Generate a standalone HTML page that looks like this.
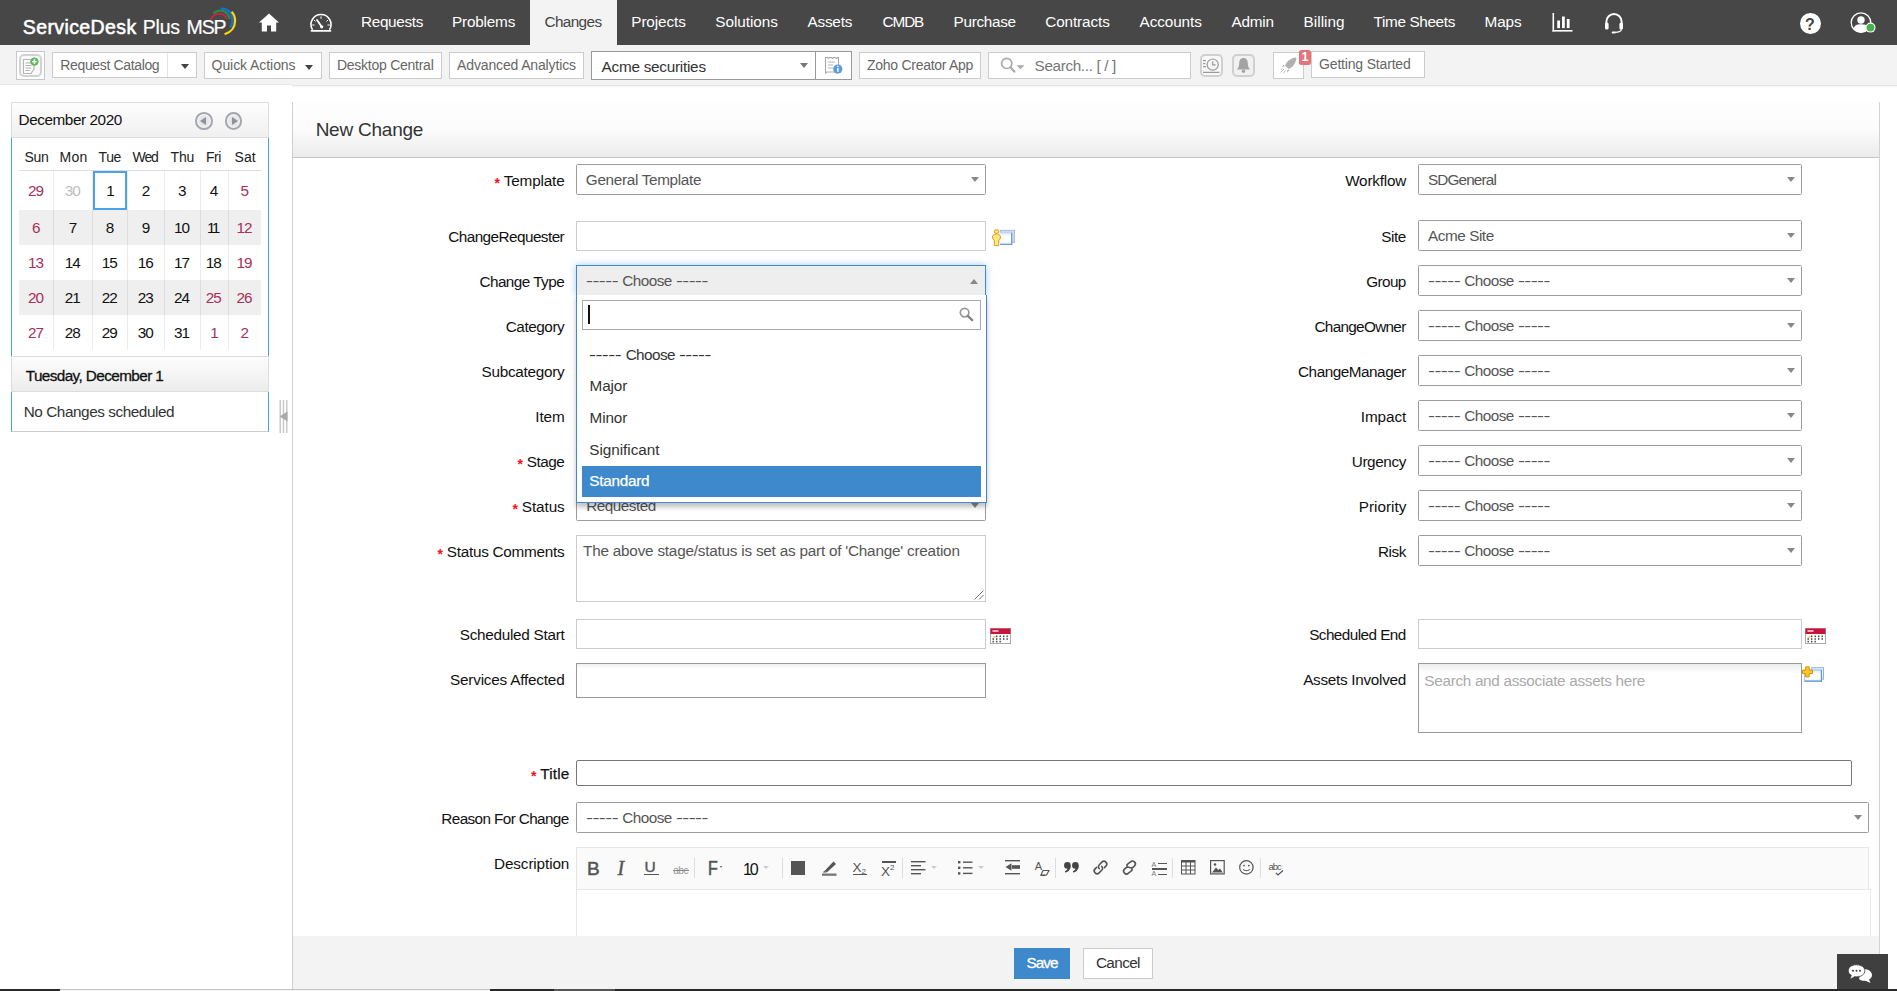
<!DOCTYPE html>
<html lang="en"><head><meta charset="utf-8"><title>ServiceDesk Plus MSP - New Change</title>
<style>
*{box-sizing:border-box;margin:0;padding:0}
html,body{width:1897px;height:991px;overflow:hidden;background:#fff}
body{position:relative;font-family:"Liberation Sans",sans-serif;font-size:15px;color:#111}
.t{position:absolute;white-space:nowrap;line-height:1;display:block}
.b{position:absolute}
svg{position:absolute;overflow:visible}
#hdr{left:0;top:0;width:1897px;height:45px;background:#474747}
#tab{left:530px;top:0;width:87px;height:45px;background:#f3f3f3}
#tb{left:0;top:45px;width:1897px;height:40px;background:#f3f3f3}
.btn{position:absolute;background:#fff;border:1px solid #ccc}
.sel{position:absolute;height:31px;background:#fff;border:1px solid #9c9c9c;border-radius:1.5px}
.sel i{position:absolute;right:6.2px;top:12px;width:0;height:0;border-left:4.5px solid transparent;border-right:4.5px solid transparent;border-top:5px solid #888}
.inp{position:absolute;height:30px;background:#fff;border:1px solid #ccc}
.sep{position:absolute;width:1px;top:858px;height:20px;background:#ddd}
</style></head>
<body>
<div class="b" id="hdr"></div><div class="b" id="tab"></div>
<span class="t" style="left:22.81px;top:18.00px;font-size:19.5px;color:#fff;letter-spacing:0.392px;-webkit-text-stroke:0.55px #fff;transform:translateY(0.3px);">ServiceDesk</span>
<span class="t" style="left:142.81px;top:18.00px;font-size:19.5px;color:#fff;letter-spacing:-0.221px;-webkit-text-stroke:0.2px #fff;transform:translateY(0.3px);">Plus</span>
<span class="t" style="left:186.61px;top:18.00px;font-size:19.5px;color:#fff;letter-spacing:-1.145px;-webkit-text-stroke:0.2px #fff;transform:translateY(0.3px);">MSP</span>
<svg style="left:208px;top:6px" width="32" height="32" viewBox="0 0 32 32" fill="none" stroke-linecap="butt">
<path d="M2.900 14 C4.500 9.500 8 7.900 11 7.900 C14.500 7.900 17.500 10 19 12.800" stroke="#d0243c" stroke-width="1.700"/>
<path d="M5.300 7.500 C7.500 5.500 10 4.700 12.200 4.700 C17 4.700 20.500 8.500 21.900 13.200" stroke="#2a8a47" stroke-width="2.300"/>
<path d="M13 2.900 C19 2.500 23.500 6.500 24.300 11 C24.900 15 24 19 21.900 21.600" stroke="#1a6fc9" stroke-width="2.500"/>
<path d="M23.600 5.700 C26 8 27.100 11.500 27.100 14.800 C27.100 21 23.300 26.300 16.600 28.300" stroke="#ffd60a" stroke-width="2.200"/>
</svg>
<svg style="left:259px;top:13px" width="20" height="19" viewBox="0 0 20 19"><path d="M10 0.5 L0 9.6 H2.8 V18.5 H8 V12.5 H12 V18.5 H17.2 V9.6 H20 Z" fill="#fff"/></svg>
<svg style="left:310px;top:14px" width="22" height="18" viewBox="0 0 22 18" fill="none" stroke="#fff" stroke-width="1.6" stroke-linecap="round"><path d="M2.2 15.2 A10 10 0 1 1 19.8 15.2"/><path d="M1.5 16.8 H20.5" stroke-width="1.8"/><path d="M7 6 L11.5 12.5" stroke-width="1.8"/><circle cx="11.7" cy="12.8" r="1.6" fill="#fff" stroke="none"/><path d="M11 2.8v1.6M4.2 6.2l1 1M17.8 6.2l-1 1M2.6 11h1.5M19.4 11h-1.5" stroke-width="1"/></svg>
<span class="t" style="left:361.04px;top:14.00px;font-size:15.3px;color:#fff;letter-spacing:-0.337px;">Requests</span>
<span class="t" style="left:452.04px;top:14.00px;font-size:15.3px;color:#fff;letter-spacing:-0.192px;">Problems</span>
<span class="t" style="left:544.54px;top:14.00px;font-size:15.3px;color:#444;letter-spacing:-0.620px;">Changes</span>
<span class="t" style="left:631.29px;top:14.00px;font-size:15.3px;color:#fff;letter-spacing:-0.107px;">Projects</span>
<span class="t" style="left:715.29px;top:14.00px;font-size:15.3px;color:#fff;letter-spacing:-0.053px;">Solutions</span>
<span class="t" style="left:807.54px;top:14.00px;font-size:15.3px;color:#fff;letter-spacing:-0.228px;">Assets</span>
<span class="t" style="left:882.54px;top:14.00px;font-size:15.3px;color:#fff;letter-spacing:-1.094px;">CMDB</span>
<span class="t" style="left:953.54px;top:14.00px;font-size:15.3px;color:#fff;letter-spacing:-0.301px;">Purchase</span>
<span class="t" style="left:1045.29px;top:14.00px;font-size:15.3px;color:#fff;letter-spacing:-0.119px;">Contracts</span>
<span class="t" style="left:1139.54px;top:14.00px;font-size:15.3px;color:#fff;letter-spacing:-0.094px;">Accounts</span>
<span class="t" style="left:1231.54px;top:14.00px;font-size:15.3px;color:#fff;letter-spacing:-0.211px;">Admin</span>
<span class="t" style="left:1303.54px;top:14.00px;font-size:15.3px;color:#fff;letter-spacing:0.034px;">Billing</span>
<span class="t" style="left:1373.54px;top:14.00px;font-size:15.3px;color:#fff;letter-spacing:-0.355px;">Time Sheets</span>
<span class="t" style="left:1484.54px;top:14.00px;font-size:15.3px;color:#fff;letter-spacing:-0.114px;">Maps</span>
<svg style="left:1552px;top:13px" width="21" height="19" viewBox="0 0 21 19" fill="#fff"><rect x="0.5" y="0" width="1.6" height="18.6"/><rect x="0.5" y="17" width="20" height="1.6"/><rect x="5.2" y="7.5" width="2.8" height="7.6"/><rect x="10" y="3.5" width="2.8" height="11.6"/><rect x="14.8" y="6" width="2.8" height="9.1"/></svg>
<svg style="left:1604px;top:13px" width="20" height="21" viewBox="0 0 20 21" fill="none" stroke="#fff"><path d="M2.4 11 V8.6 A7.6 7.6 0 0 1 17.6 8.6 V11" stroke-width="1.9"/><rect x="1" y="9.5" width="3.6" height="7" rx="1.6" fill="#fff" stroke="none"/><rect x="15.4" y="9.5" width="3.6" height="7" rx="1.6" fill="#fff" stroke="none"/><path d="M17.4 16 C17.4 18.6 14 19.4 10.6 19.4" stroke-width="1.2"/><rect x="7.6" y="18.4" width="4" height="2" rx="1" fill="#fff" stroke="none"/></svg>
<div class="b" style="left:1799.5px;top:12.5px;width:21px;height:21px;border-radius:50%;background:#fff"></div>
<span class="t" style="left:1805.12px;top:17.00px;font-size:16px;color:#474747;font-weight:bold;">?</span>
<svg style="left:1850px;top:12px" width="26" height="22" viewBox="0 0 26 22"><circle cx="11" cy="10.6" r="9.8" fill="#474747" stroke="#fff" stroke-width="1.3"/><circle cx="11" cy="8" r="3.7" fill="#fff"/><path d="M3.6 17 C4.2 12.6 8 12.2 11 12.2 C14 12.2 17.8 12.6 18.4 17 A9.8 9.8 0 0 1 3.6 17Z" fill="#fff"/><circle cx="20.5" cy="15.6" r="5" fill="#fff"/><circle cx="20.5" cy="15.6" r="3.9" fill="#47b04b"/></svg>
<div class="b" id="tb"></div>
<div class="b" style="left:0px;top:84px;width:292px;height:1px;background:#e8e8e8"></div>
<div class="b" style="left:292px;top:85px;width:1605px;height:1px;background:#e5e5e5"></div>
<div class="b" style="left:292px;top:86px;width:1605px;height:1px;background:#f6f6f6"></div>
<div class="b" style="left:292px;top:87px;width:1605px;height:1px;background:#fcfcfc"></div>
<div class="b" style="left:16px;top:51px;width:29px;height:29px;background:#fdfdfd;border:1px solid #c8c8c8"></div>
<div class="b" style="left:19px;top:54px;width:23px;height:23px;background:#fbfbfb;border:2px solid #d2d2d2;border-radius:5px"></div>
<svg style="left:22px;top:56px" width="18" height="19" viewBox="0 0 18 19"><path d="M1.5 3.5 H12 V13 L9 17.5 H1.5Z" fill="#fff" stroke="#b5b5b5" stroke-width="1.200"/><path d="M3.500 7h6M3.500 9.500h6M3.500 12h6M3.500 14.500h4" stroke="#b0b0b0" stroke-width="1.100"/><circle cx="12.4" cy="5.6" r="4.2" fill="#5cb85c"/><path d="M12.4 3.2v4.800M10 5.600h4.800" stroke="#fff" stroke-width="1.400"/></svg>
<div class="btn" style="left:52px;top:52px;width:145px;height:26px;"></div>
<div class="b" style="left:167px;top:53px;width:1px;height:24px;background:#e4e4e4"></div>
<span class="t" style="left:60.28px;top:58.00px;font-size:14px;color:#666;letter-spacing:-0.350px;">Request Catalog</span>
<div class="b" style="left:180.5px;top:64px;border-left:4.5px solid transparent;border-right:4.5px solid transparent;border-top:5px solid #444"></div>
<div class="btn" style="left:204px;top:52px;width:118px;height:27px;"></div>
<span class="t" style="left:211.58px;top:58.00px;font-size:14px;color:#666;letter-spacing:-0.069px;">Quick Actions</span>
<div class="b" style="left:305px;top:64.5px;border-left:4.5px solid transparent;border-right:4.5px solid transparent;border-top:5px solid #444"></div>
<div class="btn" style="left:329px;top:52px;width:113px;height:27px;"></div>
<span class="t" style="left:336.88px;top:58.00px;font-size:14px;color:#666;letter-spacing:-0.249px;">Desktop Central</span>
<div class="btn" style="left:449px;top:52px;width:135px;height:27px;"></div>
<span class="t" style="left:457.08px;top:58.00px;font-size:14px;color:#666;letter-spacing:-0.147px;">Advanced Analytics</span>
<div class="b" style="left:591px;top:51px;width:225px;height:29px;background:#fff;border:1px solid #999"></div>
<span class="t" style="left:601.54px;top:59.00px;font-size:15.3px;color:#333;letter-spacing:-0.247px;">Acme securities</span>
<div class="b" style="left:800px;top:63px;border-left:4.5px solid transparent;border-right:4.5px solid transparent;border-top:5px solid #777"></div>
<div class="b" style="left:815px;top:51px;width:37px;height:29px;background:#fff;border:1px solid #999"></div>
<svg style="left:824px;top:56px" width="20" height="19" viewBox="0 0 20 19"><path d="M1.5 1.5 h2 l1 1 1-1 h2 l1 1 1-1 h2 l1 1 1-1 h1 V16 l-1.5 1 -1.5-1 H3 l-1.500 1Z" fill="#fff" stroke="#a9a9a9" stroke-width="1.1"/><path d="M4 6h7M4 9h5M4 12h5" stroke="#b5b5b5" stroke-width="1.2"/><circle cx="13.8" cy="13" r="4.6" fill="#5b9bd8"/><rect x="13.1" y="12" width="1.5" height="3.8" fill="#fff"/><rect x="13.1" y="9.8" width="1.5" height="1.4" fill="#fff"/></svg>
<div class="btn" style="left:859px;top:52px;width:122px;height:27px;"></div>
<span class="t" style="left:867.08px;top:58.00px;font-size:14px;color:#666;letter-spacing:-0.288px;">Zoho Creator App</span>
<div class="btn" style="left:988px;top:52px;width:203px;height:27px;"></div>
<svg style="left:1000px;top:57px" width="26" height="16" viewBox="0 0 26 16" fill="none"><circle cx="6.7" cy="6.4" r="5.1" stroke="#aaa" stroke-width="1.7"/><path d="M10.4 10.2 L14.4 14.6" stroke="#aaa" stroke-width="2.2" stroke-linecap="round"/><path d="M16.5 8.2h8l-4 4z" fill="#aaa"/></svg>
<span class="t" style="left:1034.54px;top:58.00px;font-size:15.3px;color:#777;letter-spacing:-0.354px;">Search... [ / ]</span>
<div class="b" style="left:1200px;top:54px;width:23px;height:23px;background:#f8f8f8;border:2px solid #d0d0d0;border-radius:5px"></div>
<svg style="left:1202px;top:56px" width="19" height="19" viewBox="0 0 19 19" fill="none" stroke="#9a9a9a"><circle cx="10.7" cy="8.6" r="5.6" stroke-width="1.2" fill="#f4f4f4"/><path d="M10.7 5.2V8.8H13.6" stroke-width="1.2"/><path d="M1 4.6h3M1 7.6h2.4M1 10.6h3M1 16.4h16.500" stroke-width="1.3"/></svg>
<div class="b" style="left:1232px;top:54px;width:23px;height:23px;background:#f1f1f1;border:2px solid #d0d0d0;border-radius:5px"></div>
<svg style="left:1236px;top:57px" width="15" height="17" viewBox="0 0 15 17"><path d="M7.5 1 C4.4 1 3.2 3.600 3.200 6.2 C3.200 9.600 2 11.200 0.800 12.400 H14.200 C13 11.200 11.800 9.600 11.800 6.200 C11.800 3.600 10.600 1 7.500 1Z" fill="#a3a3a3"/><circle cx="7.500" cy="14.200" r="1.700" fill="#a3a3a3"/></svg>
<div class="btn" style="left:1273px;top:52px;width:31px;height:27px;"></div>
<svg style="left:1279px;top:57px" width="19" height="18" viewBox="0 0 19 18"><path d="M17.5 0.500 C12 1 8 4 6 8.500 L9.500 12 C14 10 17 6 17.500 0.500Z" fill="#b0b0b0"/><path d="M5.500 9.500 L2.500 10 L5 7.500ZM8.500 12.500 L8 15.500 L10.500 13Z" fill="#b0b0b0"/><path d="M5 12l-3.500 3.500M6.500 13.500l-2.500 3M3.500 11.500l-2 1.500" stroke="#bbb" stroke-width="1"/></svg>
<div class="btn" style="left:1311px;top:51px;width:114px;height:27px;"></div>
<span class="t" style="left:1319.08px;top:57.00px;font-size:14px;color:#666;letter-spacing:-0.177px;">Getting Started</span>
<div class="b" style="left:1299px;top:50px;width:12px;height:14.5px;background:#e4747a;border-radius:2.5px"></div>
<span class="t" style="left:1301.53px;top:51.00px;font-size:12.5px;color:#fff;font-weight:bold;">1</span>
<div class="b" style="left:11px;top:102px;width:258px;height:36px;background:linear-gradient(#fdfdfd,#f0f0f0);border:1px solid #dcdcdc"></div>
<span class="t" style="left:18.54px;top:112.00px;font-size:15.3px;color:#111;letter-spacing:-0.423px;">December 2020</span>
<div class="b" style="left:195.35px;top:112px;width:17.5px;height:17.5px;border-radius:50%;background:radial-gradient(circle,#dedede 0,#e9e9e9 55%,#f4f4f4 100%);border:2px solid #a4a7af;box-shadow:inset 0 0 0 1px #f6f6f6"></div>
<div class="b" style="left:199.9px;top:116.600px;border-top:4px solid transparent;border-bottom:4px solid transparent;border-right:6px solid #8e929c"></div>
<div class="b" style="left:224.75px;top:112px;width:17.5px;height:17.5px;border-radius:50%;background:radial-gradient(circle,#dedede 0,#e9e9e9 55%,#f4f4f4 100%);border:2px solid #a4a7af;box-shadow:inset 0 0 0 1px #f6f6f6"></div>
<div class="b" style="left:231.9px;top:116.600px;border-top:4px solid transparent;border-bottom:4px solid transparent;border-left:6px solid #8e929c"></div>
<div class="b" style="left:11px;top:138px;width:258px;height:219px;border-left:1px solid #4aa3e8;border-right:1px solid #4aa3e8;background:#fff"></div>
<span class="t" style="left:24.58px;top:150.00px;font-size:14px;color:#222;letter-spacing:-0.411px;">Sun</span>
<span class="t" style="left:59.58px;top:150.00px;font-size:14px;color:#222;letter-spacing:0.233px;">Mon</span>
<span class="t" style="left:98.58px;top:150.00px;font-size:14px;color:#222;letter-spacing:-0.455px;">Tue</span>
<span class="t" style="left:132.58px;top:150.00px;font-size:14px;color:#222;letter-spacing:-1.123px;">Wed</span>
<span class="t" style="left:170.58px;top:150.00px;font-size:14px;color:#222;letter-spacing:-0.213px;">Thu</span>
<span class="t" style="left:205.88px;top:150.00px;font-size:14px;color:#222;letter-spacing:-0.464px;">Fri</span>
<span class="t" style="left:234.58px;top:150.00px;font-size:14px;color:#222;letter-spacing:-0.008px;">Sat</span>
<div class="b" style="left:19px;top:170px;width:242px;height:1px;background:#ddd"></div>
<div class="b" style="left:19px;top:210px;width:242px;height:35px;background:#efefef"></div>
<div class="b" style="left:19px;top:280px;width:242px;height:35px;background:#efefef"></div>
<div class="b" style="left:53px;top:171px;width:1px;height:179px;background:rgba(0,0,0,0.08)"></div>
<div class="b" style="left:92px;top:171px;width:1px;height:179px;background:rgba(0,0,0,0.08)"></div>
<div class="b" style="left:127px;top:171px;width:1px;height:179px;background:rgba(0,0,0,0.08)"></div>
<div class="b" style="left:164px;top:171px;width:1px;height:179px;background:rgba(0,0,0,0.08)"></div>
<div class="b" style="left:200px;top:171px;width:1px;height:179px;background:rgba(0,0,0,0.08)"></div>
<div class="b" style="left:228px;top:171px;width:1px;height:179px;background:rgba(0,0,0,0.08)"></div>
<div class="b" style="left:93px;top:171px;width:34px;height:39px;border:2px solid #4aa3e8;background:#fff"></div>
<span class="t" style="left:27.94px;top:183.00px;font-size:15.3px;color:#a8305a;letter-spacing:-1.051px;">29</span>
<span class="t" style="left:64.69px;top:183.00px;font-size:15.3px;color:#bdbdbd;letter-spacing:-1.051px;">30</span>
<span class="t" style="left:106.24px;top:183.00px;font-size:15.3px;color:#111;">1</span>
<span class="t" style="left:141.69px;top:183.00px;font-size:15.3px;color:#111;">2</span>
<span class="t" style="left:177.94px;top:183.00px;font-size:15.3px;color:#111;">3</span>
<span class="t" style="left:209.69px;top:183.00px;font-size:15.3px;color:#111;">4</span>
<span class="t" style="left:240.44px;top:183.00px;font-size:15.3px;color:#a8305a;">5</span>
<span class="t" style="left:31.94px;top:220.00px;font-size:15.3px;color:#a8305a;">6</span>
<span class="t" style="left:68.69px;top:220.00px;font-size:15.3px;color:#111;">7</span>
<span class="t" style="left:105.69px;top:220.00px;font-size:15.3px;color:#111;">8</span>
<span class="t" style="left:141.69px;top:220.00px;font-size:15.3px;color:#111;">9</span>
<span class="t" style="left:173.94px;top:220.00px;font-size:15.3px;color:#111;letter-spacing:-1.051px;">10</span>
<span class="t" style="left:207.04px;top:220.00px;font-size:15.3px;color:#111;letter-spacing:-2.626px;">11</span>
<span class="t" style="left:236.44px;top:220.00px;font-size:15.3px;color:#a8305a;letter-spacing:-1.051px;">12</span>
<span class="t" style="left:27.94px;top:255.00px;font-size:15.3px;color:#a8305a;letter-spacing:-1.051px;">13</span>
<span class="t" style="left:64.69px;top:255.00px;font-size:15.3px;color:#111;letter-spacing:-1.051px;">14</span>
<span class="t" style="left:101.69px;top:255.00px;font-size:15.3px;color:#111;letter-spacing:-1.051px;">15</span>
<span class="t" style="left:137.69px;top:255.00px;font-size:15.3px;color:#111;letter-spacing:-1.051px;">16</span>
<span class="t" style="left:173.94px;top:255.00px;font-size:15.3px;color:#111;letter-spacing:-1.051px;">17</span>
<span class="t" style="left:205.69px;top:255.00px;font-size:15.3px;color:#111;letter-spacing:-1.051px;">18</span>
<span class="t" style="left:236.44px;top:255.00px;font-size:15.3px;color:#a8305a;letter-spacing:-1.051px;">19</span>
<span class="t" style="left:27.94px;top:290.00px;font-size:15.3px;color:#a8305a;letter-spacing:-1.051px;">20</span>
<span class="t" style="left:64.69px;top:290.00px;font-size:15.3px;color:#111;letter-spacing:-1.051px;">21</span>
<span class="t" style="left:101.69px;top:290.00px;font-size:15.3px;color:#111;letter-spacing:-1.051px;">22</span>
<span class="t" style="left:137.69px;top:290.00px;font-size:15.3px;color:#111;letter-spacing:-1.051px;">23</span>
<span class="t" style="left:173.94px;top:290.00px;font-size:15.3px;color:#111;letter-spacing:-1.051px;">24</span>
<span class="t" style="left:205.69px;top:290.00px;font-size:15.3px;color:#a8305a;letter-spacing:-1.051px;">25</span>
<span class="t" style="left:236.44px;top:290.00px;font-size:15.3px;color:#a8305a;letter-spacing:-1.051px;">26</span>
<span class="t" style="left:27.94px;top:325.00px;font-size:15.3px;color:#a8305a;letter-spacing:-1.051px;">27</span>
<span class="t" style="left:64.69px;top:325.00px;font-size:15.3px;color:#111;letter-spacing:-1.051px;">28</span>
<span class="t" style="left:101.69px;top:325.00px;font-size:15.3px;color:#111;letter-spacing:-1.051px;">29</span>
<span class="t" style="left:137.69px;top:325.00px;font-size:15.3px;color:#111;letter-spacing:-1.051px;">30</span>
<span class="t" style="left:173.94px;top:325.00px;font-size:15.3px;color:#111;letter-spacing:-1.051px;">31</span>
<span class="t" style="left:210.24px;top:325.00px;font-size:15.3px;color:#a8305a;">1</span>
<span class="t" style="left:240.44px;top:325.00px;font-size:15.3px;color:#a8305a;">2</span>
<div class="b" style="left:11px;top:356px;width:258px;height:36px;background:linear-gradient(#fdfdfd,#ececec);border:1px solid #dcdcdc"></div>
<span class="t" style="left:25.74px;top:368.00px;font-size:15.3px;color:#111;letter-spacing:-0.596px;-webkit-text-stroke:0.3px #111;">Tuesday, December 1</span>
<div class="b" style="left:11px;top:392px;width:258px;height:40px;border-left:1px solid #4aa3e8;border-right:1px solid #4aa3e8;border-bottom:1px solid #ccc;background:#fff"></div>
<span class="t" style="left:23.74px;top:404.00px;font-size:15.3px;color:#333;letter-spacing:-0.435px;">No Changes scheduled</span>
<svg style="left:279px;top:400px" width="9" height="33" viewBox="0 0 9 33"><rect x="0.5" y="0" width="1.5" height="33" fill="#c9c9c9"/><rect x="3.700" y="0" width="1.500" height="33" fill="#c9c9c9"/><rect x="7" y="0" width="1.500" height="33" fill="#c9c9c9"/><path d="M8.500 11.500 L0.500 16.500 L8.500 21.500Z" fill="#aaa"/></svg>
<div class="b" style="left:292px;top:102px;width:1588px;height:887px;border-left:1px solid #cfcfcf;border-right:1px solid #d2d2d2;background:#fff"></div>
<div class="b" style="left:293px;top:102px;width:1586px;height:56px;background:linear-gradient(#fefefe 0%,#fcfcfc 50%,#ebebeb 100%);border-bottom:1px solid #c6c6c6"></div>
<span class="t" style="left:315.63px;top:120.00px;font-size:19px;color:#333;letter-spacing:-0.233px;">New Change</span>
<span class="t" style="left:494.48px;top:176.00px;font-size:14px;color:#f5101c;font-weight:bold;">*</span> <span class="t" style="left:503.74px;top:173.00px;font-size:15.3px;color:#111;letter-spacing:-0.159px;">Template</span>
<span class="t" style="left:448.24px;top:229.00px;font-size:15.3px;color:#111;letter-spacing:-0.550px;">ChangeRequester</span>
<span class="t" style="left:479.44px;top:274.00px;font-size:15.3px;color:#111;letter-spacing:-0.547px;">Change Type</span>
<span class="t" style="left:505.74px;top:319.00px;font-size:15.3px;color:#111;letter-spacing:-0.445px;">Category</span>
<span class="t" style="left:481.54px;top:364.00px;font-size:15.3px;color:#111;letter-spacing:-0.273px;">Subcategory</span>
<span class="t" style="left:535.34px;top:409.00px;font-size:15.3px;color:#111;letter-spacing:-0.128px;">Item</span>
<span class="t" style="left:517.58px;top:457.00px;font-size:14px;color:#f5101c;font-weight:bold;">*</span> <span class="t" style="left:526.84px;top:454.00px;font-size:15.3px;color:#111;letter-spacing:-0.530px;">Stage</span>
<span class="t" style="left:512.58px;top:502.00px;font-size:14px;color:#f5101c;font-weight:bold;">*</span> <span class="t" style="left:521.84px;top:499.00px;font-size:15.3px;color:#111;letter-spacing:-0.102px;">Status</span>
<span class="t" style="left:437.48px;top:547.00px;font-size:14px;color:#f5101c;font-weight:bold;">*</span> <span class="t" style="left:446.74px;top:544.00px;font-size:15.3px;color:#111;letter-spacing:-0.258px;">Status Comments</span>
<span class="t" style="left:459.84px;top:627.00px;font-size:15.3px;color:#111;letter-spacing:-0.285px;">Scheduled Start</span>
<span class="t" style="left:450.04px;top:672.00px;font-size:15.3px;color:#111;letter-spacing:-0.204px;">Services Affected</span>
<span class="t" style="left:531.08px;top:769.00px;font-size:14px;color:#f5101c;font-weight:bold;">*</span> <span class="t" style="left:540.34px;top:766.00px;font-size:15.3px;color:#111;letter-spacing:0.155px;-webkit-text-stroke:0.25px #111;">Title</span>
<span class="t" style="left:441.34px;top:811.00px;font-size:15.3px;color:#111;letter-spacing:-0.613px;">Reason For Change</span>
<span class="t" style="left:494.04px;top:856.00px;font-size:15.3px;color:#111;letter-spacing:-0.125px;">Description</span>
<div class="sel" style="left:576px;top:164px;width:410px;height:31px;border-color:#9c9c9c"><i></i></div>
<span class="t" style="left:585.84px;top:172.00px;font-size:15.3px;color:#555;letter-spacing:-0.320px;">General Template</span>
<div class="inp" style="left:576px;top:221px;width:410px;height:30px;"></div>
<svg style="left:991px;top:228px" width="26" height="19" viewBox="0 0 26 19"><defs><linearGradient id="wg" x1="0" y1="0" x2="0" y2="1"><stop offset="0" stop-color="#cfe3f7"/><stop offset="0.3" stop-color="#fff"/><stop offset="0.75" stop-color="#fff"/><stop offset="1" stop-color="#ececec"/></linearGradient></defs><rect x="9.300" y="2.400" width="14.200" height="12" fill="#cfd9f0" stroke="#a9bde6" stroke-width="1"/><rect x="9" y="4.500" width="12" height="12" fill="url(#wg)"/><rect x="20" y="4.500" width="1.300" height="12.500" fill="#6a9fd8"/><rect x="9" y="15.700" width="12.300" height="1.300" fill="#6a9fd8"/><rect x="9" y="4" width="12" height="0.800" fill="#b9d3ef"/><path d="M3.600 6 L7.400 6 L9.400 8 V10.600 L7.700 12 V17.600 H3.300 V12 L1.600 10.600 V8Z" fill="#fbe97a" stroke="#e09a28" stroke-width="1" stroke-linejoin="round"/><ellipse cx="5.500" cy="3.500" rx="2.300" ry="1.900" fill="#fbe97a" stroke="#e09a28" stroke-width="1"/></svg>
<div class="sel" style="left:576px;top:490px;width:410px;height:31px;border-color:#9c9c9c"><i></i></div>
<span class="t" style="left:586.24px;top:498.00px;font-size:15.3px;color:#555;letter-spacing:-0.504px;">Requested</span>
<div class="inp" style="left:576px;top:535px;width:410px;height:67px;"></div>
<span class="t" style="left:583.04px;top:543.00px;font-size:15.3px;color:#555;letter-spacing:-0.219px;">The above stage/status is set as part of &#x27;Change&#x27; creation</span>
<svg style="left:974px;top:590px" width="10" height="10" viewBox="0 0 10 10" stroke="#777" stroke-width="1"><path d="M0.500 9.500 L9.500 0.500M5 9.500 L9.500 5"/></svg>
<div class="inp" style="left:576px;top:619px;width:410px;height:30px;"></div>
<svg style="left:990px;top:628px" width="21" height="16" viewBox="0 0 21 16"><rect x="0.500" y="0.500" width="20" height="15" fill="#fff" stroke="#aaa" stroke-width="1"/><rect x="0.500" y="0.500" width="20" height="5.500" fill="#c8143c"/><rect x="2.500" y="2" width="6" height="2" fill="#f6a7b7"/><g fill="#444"><rect x="6" y="7.500" width="1.400" height="1.600"/><rect x="9.500" y="7.500" width="1.400" height="1.600"/><rect x="13" y="7.500" width="1.400" height="1.600"/><rect x="16.500" y="7.500" width="1.400" height="1.600"/><rect x="2.500" y="10.200" width="1.400" height="1.600"/><rect x="6" y="10.200" width="1.400" height="1.600"/><rect x="9.500" y="10.200" width="1.400" height="1.600"/><rect x="13" y="10.200" width="1.400" height="1.600"/><rect x="16.500" y="10.200" width="1.400" height="1.600"/><rect x="2.500" y="12.800" width="1.400" height="1.600"/><rect x="6" y="12.800" width="1.400" height="1.600"/><rect x="9.500" y="12.800" width="1.400" height="1.600"/></g><path d="M2 9.500l3.500-2v2z" fill="#f2b632"/></svg>
<div class="b" style="left:576px;top:663px;width:410px;height:35px;background:linear-gradient(#f0f0f0,#fff 5px);border:1px solid #999"></div>
<div class="b" style="left:576px;top:760px;width:1276px;height:26px;background:#fff;border:1px solid #777;border-radius:2px"></div>
<div class="sel" style="left:576px;top:802px;width:1293px;height:31px;border-color:#9c9c9c"><i></i></div>
<span class="t" style="left:586.08px;top:810.00px;font-size:15.3px;color:#555;letter-spacing:-0.328px;transform:scaleX(1.35);transform-origin:0 0;">-----</span> <span class="t" style="left:622.34px;top:810.00px;font-size:15.3px;color:#555;letter-spacing:-0.554px;">Choose</span> <span class="t" style="left:676.08px;top:810.00px;font-size:15.3px;color:#555;letter-spacing:-0.384px;transform:scaleX(1.35);transform-origin:0 0;">-----</span>
<span class="t" style="left:1345.14px;top:173.00px;font-size:15.3px;color:#111;letter-spacing:-0.209px;">Workflow</span>
<span class="t" style="left:1381.34px;top:229.00px;font-size:15.3px;color:#111;letter-spacing:-0.465px;">Site</span>
<span class="t" style="left:1366.34px;top:274.00px;font-size:15.3px;color:#111;letter-spacing:-0.638px;">Group</span>
<span class="t" style="left:1314.44px;top:319.00px;font-size:15.3px;color:#111;letter-spacing:-0.678px;">ChangeOwner</span>
<span class="t" style="left:1298.04px;top:364.00px;font-size:15.3px;color:#111;letter-spacing:-0.475px;">ChangeManager</span>
<span class="t" style="left:1360.74px;top:409.00px;font-size:15.3px;color:#111;letter-spacing:-0.068px;">Impact</span>
<span class="t" style="left:1351.74px;top:454.00px;font-size:15.3px;color:#111;letter-spacing:-0.401px;">Urgency</span>
<span class="t" style="left:1358.84px;top:499.00px;font-size:15.3px;color:#111;letter-spacing:-0.018px;">Priority</span>
<span class="t" style="left:1378.04px;top:544.00px;font-size:15.3px;color:#111;letter-spacing:-0.495px;">Risk</span>
<span class="t" style="left:1309.14px;top:627.00px;font-size:15.3px;color:#111;letter-spacing:-0.550px;">Scheduled End</span>
<span class="t" style="left:1303.14px;top:672.00px;font-size:15.3px;color:#111;letter-spacing:-0.284px;">Assets Involved</span>
<div class="sel" style="left:1418px;top:164px;width:384px;height:31px;border-color:#9c9c9c"><i></i></div>
<span class="t" style="left:1427.94px;top:172.00px;font-size:15.3px;color:#555;letter-spacing:-0.851px;">SDGeneral</span>
<div class="sel" style="left:1418px;top:220px;width:384px;height:31px;border-color:#9c9c9c"><i></i></div>
<span class="t" style="left:1427.94px;top:228.00px;font-size:15.3px;color:#555;letter-spacing:-0.432px;">Acme Site</span>
<div class="sel" style="left:1418px;top:265px;width:384px;height:31px;border-color:#9c9c9c"><i></i></div>
<span class="t" style="left:1428.08px;top:273.00px;font-size:15.3px;color:#555;letter-spacing:-0.328px;transform:scaleX(1.35);transform-origin:0 0;">-----</span> <span class="t" style="left:1464.34px;top:273.00px;font-size:15.3px;color:#555;letter-spacing:-0.554px;">Choose</span> <span class="t" style="left:1518.08px;top:273.00px;font-size:15.3px;color:#555;letter-spacing:-0.384px;transform:scaleX(1.35);transform-origin:0 0;">-----</span>
<div class="sel" style="left:1418px;top:310px;width:384px;height:31px;border-color:#9c9c9c"><i></i></div>
<span class="t" style="left:1428.08px;top:318.00px;font-size:15.3px;color:#555;letter-spacing:-0.328px;transform:scaleX(1.35);transform-origin:0 0;">-----</span> <span class="t" style="left:1464.34px;top:318.00px;font-size:15.3px;color:#555;letter-spacing:-0.554px;">Choose</span> <span class="t" style="left:1518.08px;top:318.00px;font-size:15.3px;color:#555;letter-spacing:-0.384px;transform:scaleX(1.35);transform-origin:0 0;">-----</span>
<div class="sel" style="left:1418px;top:355px;width:384px;height:31px;border-color:#9c9c9c"><i></i></div>
<span class="t" style="left:1428.08px;top:363.00px;font-size:15.3px;color:#555;letter-spacing:-0.328px;transform:scaleX(1.35);transform-origin:0 0;">-----</span> <span class="t" style="left:1464.34px;top:363.00px;font-size:15.3px;color:#555;letter-spacing:-0.554px;">Choose</span> <span class="t" style="left:1518.08px;top:363.00px;font-size:15.3px;color:#555;letter-spacing:-0.384px;transform:scaleX(1.35);transform-origin:0 0;">-----</span>
<div class="sel" style="left:1418px;top:400px;width:384px;height:31px;border-color:#9c9c9c"><i></i></div>
<span class="t" style="left:1428.08px;top:408.00px;font-size:15.3px;color:#555;letter-spacing:-0.328px;transform:scaleX(1.35);transform-origin:0 0;">-----</span> <span class="t" style="left:1464.34px;top:408.00px;font-size:15.3px;color:#555;letter-spacing:-0.554px;">Choose</span> <span class="t" style="left:1518.08px;top:408.00px;font-size:15.3px;color:#555;letter-spacing:-0.384px;transform:scaleX(1.35);transform-origin:0 0;">-----</span>
<div class="sel" style="left:1418px;top:445px;width:384px;height:31px;border-color:#9c9c9c"><i></i></div>
<span class="t" style="left:1428.08px;top:453.00px;font-size:15.3px;color:#555;letter-spacing:-0.328px;transform:scaleX(1.35);transform-origin:0 0;">-----</span> <span class="t" style="left:1464.34px;top:453.00px;font-size:15.3px;color:#555;letter-spacing:-0.554px;">Choose</span> <span class="t" style="left:1518.08px;top:453.00px;font-size:15.3px;color:#555;letter-spacing:-0.384px;transform:scaleX(1.35);transform-origin:0 0;">-----</span>
<div class="sel" style="left:1418px;top:490px;width:384px;height:31px;border-color:#9c9c9c"><i></i></div>
<span class="t" style="left:1428.08px;top:498.00px;font-size:15.3px;color:#555;letter-spacing:-0.328px;transform:scaleX(1.35);transform-origin:0 0;">-----</span> <span class="t" style="left:1464.34px;top:498.00px;font-size:15.3px;color:#555;letter-spacing:-0.554px;">Choose</span> <span class="t" style="left:1518.08px;top:498.00px;font-size:15.3px;color:#555;letter-spacing:-0.384px;transform:scaleX(1.35);transform-origin:0 0;">-----</span>
<div class="sel" style="left:1418px;top:535px;width:384px;height:31px;border-color:#9c9c9c"><i></i></div>
<span class="t" style="left:1428.08px;top:543.00px;font-size:15.3px;color:#555;letter-spacing:-0.328px;transform:scaleX(1.35);transform-origin:0 0;">-----</span> <span class="t" style="left:1464.34px;top:543.00px;font-size:15.3px;color:#555;letter-spacing:-0.554px;">Choose</span> <span class="t" style="left:1518.08px;top:543.00px;font-size:15.3px;color:#555;letter-spacing:-0.384px;transform:scaleX(1.35);transform-origin:0 0;">-----</span>
<div class="inp" style="left:1418px;top:619px;width:384px;height:30px;"></div>
<svg style="left:1805px;top:628px" width="21" height="16" viewBox="0 0 21 16"><rect x="0.500" y="0.500" width="20" height="15" fill="#fff" stroke="#aaa" stroke-width="1"/><rect x="0.500" y="0.500" width="20" height="5.500" fill="#c8143c"/><rect x="2.500" y="2" width="6" height="2" fill="#f6a7b7"/><g fill="#444"><rect x="6" y="7.500" width="1.400" height="1.600"/><rect x="9.500" y="7.500" width="1.400" height="1.600"/><rect x="13" y="7.500" width="1.400" height="1.600"/><rect x="16.500" y="7.500" width="1.400" height="1.600"/><rect x="2.500" y="10.200" width="1.400" height="1.600"/><rect x="6" y="10.200" width="1.400" height="1.600"/><rect x="9.500" y="10.200" width="1.400" height="1.600"/><rect x="13" y="10.200" width="1.400" height="1.600"/><rect x="16.500" y="10.200" width="1.400" height="1.600"/><rect x="2.500" y="12.800" width="1.400" height="1.600"/><rect x="6" y="12.800" width="1.400" height="1.600"/><rect x="9.500" y="12.800" width="1.400" height="1.600"/></g><path d="M2 9.500l3.500-2v2z" fill="#f2b632"/></svg>
<div class="b" style="left:1418px;top:663px;width:384px;height:70px;background:linear-gradient(#ececec,#fff 9px);border:1px solid #999"></div>
<span class="t" style="left:1424.34px;top:673.00px;font-size:15.3px;color:#aaa;letter-spacing:-0.306px;">Search and associate assets here</span>
<svg style="left:1802px;top:666px" width="23" height="17" viewBox="0 0 23 17"><rect x="9.800" y="1.700" width="11.700" height="11.500" fill="#e4eefa" stroke="#8db4e3" stroke-width="1"/><rect x="2.700" y="4" width="16.700" height="11" fill="url(#wg)" stroke="#8db4e3" stroke-width="0.800"/><rect x="18.800" y="4" width="1.200" height="11.500" fill="#5f98d6"/><rect x="2.500" y="14.600" width="17.500" height="1.200" fill="#5f98d6"/><path d="M3.700 0.800h3.500v3.300h3.200v3.500h-3.200v3.300h-3.500v-3.300h-3.200v-3.500h3.200z" fill="#f7c92a" stroke="#d6940c" stroke-width="1" stroke-linejoin="round"/></svg>
<div class="b" style="left:576px;top:847px;width:1293px;height:43px;background:#fafafa;border:1px solid #e6e6e6"></div>
<div class="b" style="left:576px;top:889px;width:1295px;height:48px;background:#fff;border:1px solid #e6e6e6;border-bottom:0"></div>
<span class="t" style="left:587.03px;top:859.00px;font-size:19px;color:#555;-webkit-text-stroke:0.5px #555;">B</span>
<span class="t" style="left:617.60px;top:858.00px;font-size:20px;color:#555;font-style:italic;font-family:'Liberation Serif',serif;-webkit-text-stroke:0.4px #555;">I</span>
<span class="t" style="left:644.53px;top:859.00px;font-size:15.5px;color:#555;-webkit-text-stroke:0.4px #555;">U</span>
<div class="b" style="left:644px;top:873.5px;width:15px;height:1.6px;background:#555"></div>
<span class="t" style="left:673.20px;top:866.00px;font-size:10px;color:#999;letter-spacing:-0.462px;">abc</span>
<div class="b" style="left:673px;top:870px;width:15.5px;height:1px;background:#888"></div>
<div class="sep" style="left:694px"></div>
<div class="sep" style="left:782px"></div>
<div class="sep" style="left:902px"></div>
<div class="sep" style="left:1055px"></div>
<div class="sep" style="left:1172px"></div>
<div class="sep" style="left:1260px"></div>
<span class="t" style="left:707.81px;top:859.00px;font-size:19.5px;color:#555;-webkit-text-stroke:0.6px #555;transform:scaleX(0.82);transform-origin:0 0;">F</span>
<div class="b" style="left:719.5px;top:866px;border-left:1.5px solid transparent;border-right:1.5px solid transparent;border-top:2px solid #555"></div>
<span class="t" style="left:743.02px;top:862.00px;font-size:16px;color:#111;letter-spacing:-2.097px;">10</span>
<div class="b" style="left:763px;top:866px;border-left:3px solid transparent;border-right:3px solid transparent;border-top:3.500px solid #ccc"></div>
<div class="b" style="left:791px;top:861px;width:14px;height:14px;background:#555"></div>
<svg style="left:822px;top:860.4px" width="15" height="16" viewBox="0 0 15 16"><path d="M2.500 11 L11.500 1.500 L14 4 L5 12.200Z" fill="#555"/><path d="M1 12.500l1.200-1.700 2.500 1.600z" fill="#555"/><rect x="0" y="13.500" width="14.500" height="2.300" fill="#777"/></svg>
<span class="t" style="left:852.60px;top:861.00px;font-size:13.5px;color:#555;">X</span>
<span class="t" style="left:861.56px;top:868.00px;font-size:8px;color:#555;">2</span>
<div class="b" style="left:852.5px;top:874px;width:14px;height:1.3px;background:#555"></div>
<span class="t" style="left:881.10px;top:865.00px;font-size:13.5px;color:#555;">X</span>
<span class="t" style="left:890.06px;top:864.00px;font-size:8px;color:#555;">2</span>
<div class="b" style="left:881.5px;top:861.4px;width:14px;height:1.3px;background:#555"></div>
<svg style="left:911px;top:861px" width="15" height="14" viewBox="0 0 15 14" fill="#555"><rect x="0" y="0" width="14.500" height="1.400"/><rect x="0" y="4" width="10" height="1.400"/><rect x="0" y="8" width="14.500" height="1.400"/><rect x="0" y="12" width="10" height="1.400"/></svg>
<div class="b" style="left:931px;top:866px;border-left:3px solid transparent;border-right:3px solid transparent;border-top:3.500px solid #ccc"></div>
<svg style="left:958px;top:861px" width="15" height="14" viewBox="0 0 15 14" fill="#555"><rect x="0" y="0" width="2.400" height="2.400"/><rect x="0" y="5.600" width="2.400" height="2.400"/><rect x="0" y="11.200" width="2.400" height="2.400"/><rect x="5" y="0.500" width="9.500" height="1.400"/><rect x="5" y="6.100" width="9.500" height="1.400"/><rect x="5" y="11.700" width="9.500" height="1.400"/></svg>
<div class="b" style="left:978px;top:866px;border-left:3px solid transparent;border-right:3px solid transparent;border-top:3.500px solid #ccc"></div>
<svg style="left:1005px;top:860.4px" width="15" height="15" viewBox="0 0 15 15" fill="#555"><rect x="0" y="0" width="15" height="1.400"/><rect x="0" y="13" width="15" height="1.400"/><rect x="7" y="5.200" width="8" height="3.600"/><path d="M6.500 3.200v7.600L0.500 7z"/></svg>
<span class="t" style="left:1034.67px;top:861.00px;font-size:11px;color:#555;">A</span>
<svg style="left:1040px;top:868px" width="10" height="8" viewBox="0 0 10 8" fill="none" stroke="#555" stroke-width="1.100"><path d="M3 2.500 h6 l-2.500 4.500 h-5.500z" fill="#fafafa"/><path d="M0.500 7.500h5"/></svg>
<svg style="left:1064px;top:862.4px" width="15" height="11" viewBox="0 0 15 11" fill="#444"><circle cx="3.400" cy="3.400" r="3.300"/><path d="M6.700 3.400 C6.700 7.500 4.500 9.800 1.200 10.600 L0.800 9.400 C2.800 8.600 3.700 7.300 3.800 5.600Z"/><circle cx="11.400" cy="3.400" r="3.300"/><path d="M14.700 3.400 C14.700 7.500 12.500 9.800 9.200 10.600 L8.800 9.400 C10.800 8.600 11.700 7.300 11.800 5.600Z"/></svg>
<svg style="left:1093px;top:860.4px" width="15" height="15" viewBox="0 0 15 15" fill="none" stroke="#555" stroke-width="1.600" stroke-linecap="round"><path d="M6.300 8.700 a2.800 2.800 0 0 1 0 -4 l2.600-2.600 a2.800 2.800 0 0 1 4 4 l-1.500 1.500"/><path d="M8.700 6.300 a2.800 2.800 0 0 1 0 4 l-2.600 2.600 a2.800 2.800 0 0 1 -4 -4 l1.500-1.500"/></svg>
<svg style="left:1122px;top:860.4px" width="15" height="15" viewBox="0 0 15 15" fill="none" stroke="#555" stroke-width="1.600" stroke-linecap="round"><path d="M5.200 6 l-0.300-1.300 l3.600-2.800 a2.800 2.800 0 0 1 4 4 l-2.200 2 l-2.500-0.200"/><path d="M9.800 9 l0.300 1.300 l-3.600 2.800 a2.800 2.800 0 0 1 -4 -4 l2.200-2 l2.500 0.200"/></svg>
<span class="t" style="left:1151.39px;top:861.00px;font-size:7px;color:#777;">A</span>
<span class="t" style="left:1151.39px;top:870.00px;font-size:7px;color:#777;">A</span>
<div class="b" style="left:1157.5px;top:862.5px;width:9px;height:1.5px;background:#555"></div>
<div class="b" style="left:1151.5px;top:868px;width:15px;height:1.5px;background:#555"></div>
<div class="b" style="left:1157.5px;top:873.5px;width:9px;height:1.5px;background:#555"></div>
<svg style="left:1181px;top:860.4px" width="15" height="15" viewBox="0 0 15 15" fill="none" stroke="#555" stroke-width="1"><rect x="0.500" y="0.500" width="13.500" height="13.500"/><path d="M0.500 1.500h13.500" stroke-width="2"/><path d="M5 0.500v13.500M9.500 0.500v13.500M0.500 6h13.500M0.500 10h13.500"/></svg>
<svg style="left:1210px;top:860.4px" width="15" height="15" viewBox="0 0 15 15"><rect x="0.600" y="0.600" width="13.600" height="13.300" fill="none" stroke="#555" stroke-width="1.200"/><path d="M2 12.500 L6 7.500 L8.300 10 L10 8.500 L12.800 12.500Z" fill="#555"/><circle cx="5" cy="4.500" r="1.300" fill="#555"/></svg>
<svg style="left:1239px;top:860.4px" width="15" height="15" viewBox="0 0 15 15" fill="none" stroke="#555"><circle cx="7.400" cy="7.400" r="6.700" stroke-width="1.200"/><circle cx="5" cy="5.600" r="0.900" fill="#555" stroke="none"/><circle cx="9.800" cy="5.600" r="0.900" fill="#555" stroke="none"/><path d="M4.200 9.200 C5.500 11.200 9.300 11.200 10.600 9.200" stroke-width="1.100"/></svg>
<span class="t" style="left:1268.41px;top:862.00px;font-size:9.5px;color:#555;letter-spacing:-1.027px;">abc</span>
<svg style="left:1275px;top:870px" width="9" height="6" viewBox="0 0 9 6" fill="none" stroke="#555" stroke-width="1.200"><path d="M0.800 2.800 L3 5 L8 0.500"/></svg>
<div class="b" style="left:576px;top:265px;width:410px;height:30px;background:#eee;border:1px solid #3f8ad3;border-bottom:0;box-shadow:0 0 7px rgba(74,150,225,.5)"></div>
<span class="t" style="left:586.08px;top:273.00px;font-size:15.3px;color:#555;letter-spacing:-0.328px;transform:scaleX(1.35);transform-origin:0 0;">-----</span> <span class="t" style="left:622.34px;top:273.00px;font-size:15.3px;color:#555;letter-spacing:-0.554px;">Choose</span> <span class="t" style="left:676.08px;top:273.00px;font-size:15.3px;color:#555;letter-spacing:-0.384px;transform:scaleX(1.35);transform-origin:0 0;">-----</span>
<div class="b" style="left:970px;top:278.7px;border-left:4.5px solid transparent;border-right:4.5px solid transparent;border-bottom:5px solid #888"></div>
<div class="b" style="left:576px;top:295px;width:411px;height:208px;background:#fff;border:1px solid #3f8ad3;border-top:0;box-shadow:0 4px 5px rgba(0,0,0,.25)"></div>
<div class="b" style="left:582px;top:300px;width:399px;height:30px;background:#fff;border:1px solid #aaa"></div>
<div class="b" style="left:588px;top:305px;width:2px;height:18.5px;background:#111"></div>
<svg style="left:959px;top:307px" width="15" height="15" viewBox="0 0 15 15" fill="none"><circle cx="5.600" cy="5.600" r="4.300" stroke="#999" stroke-width="1.700"/><path d="M8.800 8.800 L13.200 13.200" stroke="#888" stroke-width="2.400" stroke-linecap="round"/></svg>
<span class="t" style="left:589.38px;top:347.00px;font-size:15.3px;color:#333;letter-spacing:-0.328px;transform:scaleX(1.35);transform-origin:0 0;">-----</span> <span class="t" style="left:625.64px;top:347.00px;font-size:15.3px;color:#333;letter-spacing:-0.554px;">Choose</span> <span class="t" style="left:679.38px;top:347.00px;font-size:15.3px;color:#333;letter-spacing:-0.384px;transform:scaleX(1.35);transform-origin:0 0;">-----</span>
<span class="t" style="left:589.54px;top:378.00px;font-size:15.3px;color:#333;letter-spacing:-0.121px;">Major</span>
<span class="t" style="left:589.54px;top:410.00px;font-size:15.3px;color:#333;letter-spacing:-0.121px;">Minor</span>
<span class="t" style="left:589.24px;top:442.00px;font-size:15.3px;color:#333;letter-spacing:-0.031px;">Significant</span>
<div class="b" style="left:582px;top:466px;width:399px;height:31px;background:#3d89cc"></div>
<span class="t" style="left:589.24px;top:473.00px;font-size:15.3px;color:#fff;letter-spacing:-0.261px;-webkit-text-stroke:0.25px #fff;">Standard</span>
<div class="b" style="left:293px;top:936px;width:1586px;height:53px;background:#f3f3f3"></div>
<div class="b" style="left:1014px;top:948px;width:56px;height:31px;background:#3d89cc"></div>
<span class="t" style="left:1026.44px;top:955.00px;font-size:15.3px;color:#fff;letter-spacing:-0.903px;-webkit-text-stroke:0.300px #fff;">Save</span>
<div class="b" style="left:1083px;top:948px;width:70px;height:31px;background:#fff;border:1px solid #ccc"></div>
<span class="t" style="left:1095.94px;top:955.00px;font-size:15.3px;color:#333;letter-spacing:-0.612px;">Cancel</span>
<div class="b" style="left:1837px;top:954px;width:51px;height:35px;background:#3f3f3f"></div>
<svg style="left:1848px;top:964px" width="25" height="20" viewBox="0 0 25 20"><path d="M14 5 C20 4.500 24 7.500 24 11 C24 13 22.800 14.600 21 15.600 L22.500 19 L17.500 16.800 C15 17 12.500 16.500 11 15Z" fill="#fff"/><path d="M8.500 0.800 C13.500 0.800 16.800 3.400 16.800 6.800 C16.800 10.200 13.500 12.800 8.500 12.800 C7.800 12.800 7.200 12.750 6.500 12.650 L2 15.500 L3.300 11.300 C1.300 10.200 0.300 8.600 0.300 6.800 C0.300 3.400 3.500 0.800 8.500 0.800Z" fill="#fff" stroke="#3f3f3f" stroke-width="0.800"/><circle cx="5" cy="6.800" r="1" fill="#3f3f3f"/><circle cx="8.500" cy="6.800" r="1" fill="#3f3f3f"/><circle cx="12" cy="6.800" r="1" fill="#3f3f3f"/></svg>
<div class="b" style="left:0px;top:989px;width:1897px;height:2px;background:#282828"></div>
<div class="b" style="left:60px;top:989px;width:430px;height:1px;background:#c4c4c4"></div>
<div class="b" style="left:60px;top:990px;width:430px;height:1px;background:#f4f4f4"></div>
<div class="b" style="left:554px;top:989px;width:61px;height:2px;background:#555"></div>
</body></html>
